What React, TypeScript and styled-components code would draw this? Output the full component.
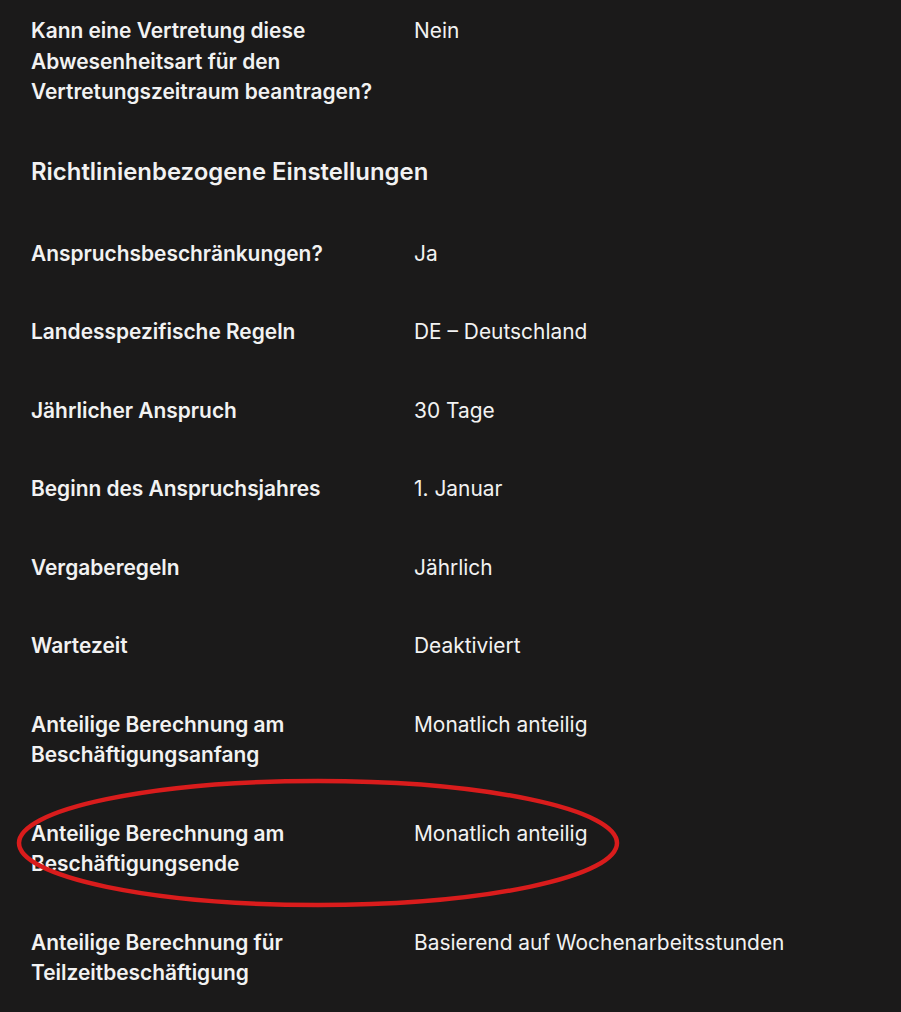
import React from "react";
import styled, { createGlobalStyle } from "styled-components";

const Global = createGlobalStyle`
  html, body { margin: 0; padding: 0; background: #1b1a1a; }
  body { font-family: Inter, "Noto Sans", sans-serif; color: #f2f2f2; -webkit-font-smoothing: antialiased; }
`;

const Page = styled.div`
  width: 901px;
  height: 1012px;
  overflow: hidden;
  background: #1b1a1a;
  box-sizing: border-box;
  padding: 0 31px;
`;

const List = styled.div`
  display: flex;
  flex-direction: column;
  margin-top: -8px;
`;

const Row = styled.div`
  position: relative;
  display: grid;
  grid-template-columns: 383px 1fr;
  padding: 24px 0;
  font-size: 20.9px;
  line-height: 30.5px;
`;

const Label = styled.div`
  font-weight: 600;
  padding-right: 20px;
`;

const Value = styled.div`
  font-weight: 400;
`;

const SectionTitle = styled.h2`
  margin: 0;
  padding: 25px 0 28px;
  font-size: 23.9px;
  line-height: 30px;
  font-weight: 600;
`;

const Highlight = styled.svg`
  position: absolute;
  left: -15px;
  top: -17px;
  width: 604px;
  height: 132px;
  pointer-events: none;
  overflow: visible;
`;

type Item = { label: string; value: string; marked?: boolean };

const topItems: Item[] = [
  {
    label: "Kann eine Vertretung diese Abwesenheitsart für den Vertretungszeitraum beantragen?",
    value: "Nein",
  },
];

const policyItems: Item[] = [
  { label: "Anspruchsbeschränkungen?", value: "Ja" },
  { label: "Landesspezifische Regeln", value: "DE – Deutschland" },
  { label: "Jährlicher Anspruch", value: "30 Tage" },
  { label: "Beginn des Anspruchsjahres", value: "1. Januar" },
  { label: "Vergaberegeln", value: "Jährlich" },
  { label: "Wartezeit", value: "Deaktiviert" },
  { label: "Anteilige Berechnung am Beschäftigungsanfang", value: "Monatlich anteilig" },
  { label: "Anteilige Berechnung am Beschäftigungsende", value: "Monatlich anteilig", marked: true },
  { label: "Anteilige Berechnung für Teilzeitbeschäftigung", value: "Basierend auf Wochenarbeitsstunden" },
];

const DetailRow = ({ item }: { item: Item }) => (
  <Row>
    <Label>{item.label}</Label>
    <Value>{item.value}</Value>
    {item.marked && (
      <Highlight viewBox="0 0 604 132">
        <ellipse cx="302" cy="65" rx="299" ry="62" fill="none" stroke="#d91c1c" strokeWidth="4.5" />
      </Highlight>
    )}
  </Row>
);

export default function App() {
  return (
    <Page>
      <Global />
      <List>
        {topItems.map((it) => (
          <DetailRow key={it.label} item={it} />
        ))}
        <SectionTitle>Richtlinienbezogene Einstellungen</SectionTitle>
        {policyItems.map((it) => (
          <DetailRow key={it.label} item={it} />
        ))}
      </List>
    </Page>
  );
}
